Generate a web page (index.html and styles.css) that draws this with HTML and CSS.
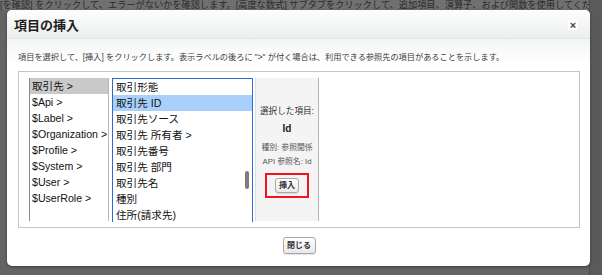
FILE: index.html
```html
<!DOCTYPE html>
<html lang="ja">
<head>
    <meta charset="UTF-8">
    <title>項目の挿入</title>
    <link rel="stylesheet" href="styles.css">
</head>
<body>
    <div class="page">
        <div class="page-text">[を確認] をクリックして、エラーがないかを確認します。[高度な数式] サブタブをクリックして、追加項目、演算子、および関数を使用してくだ</div>
        <div class="page-side"></div>
    </div>

    <div class="dialog">
        <div class="dialog-header">
            <h2>項目の挿入</h2>
            <span class="close">×</span>
        </div>
        <div class="dialog-body">
            <p class="hint">項目を選択して、[挿入] をクリックします。表示ラベルの後ろに "&gt;" が付く場合は、利用できる参照先の項目があることを示します。</p>
            <div class="picker">
                <ul class="list list-objects">
                    <li class="selected">取引先 &gt;</li>
                    <li>$Api &gt;</li>
                    <li>$Label &gt;</li>
                    <li>$Organization &gt;</li>
                    <li>$Profile &gt;</li>
                    <li>$System &gt;</li>
                    <li>$User &gt;</li>
                    <li>$UserRole &gt;</li>
                </ul>
                <div class="list list-fields">
                    <ul>
                        <li>取引形態</li>
                        <li class="selected">取引先 ID</li>
                        <li>取引先ソース</li>
                        <li>取引先 所有者 &gt;</li>
                        <li>取引先番号</li>
                        <li>取引先 部門</li>
                        <li>取引先名</li>
                        <li>種別</li>
                        <li>住所(請求先)</li>
                    </ul>
                    <span class="scroll-thumb"></span>
                </div>
                <div class="detail">
                    <div class="detail-label">選択した項目:</div>
                    <div class="detail-name">Id</div>
                    <div class="detail-meta">種別: 参照関係</div>
                    <div class="detail-meta">API 参照名: Id</div>
                    <div class="highlight-box">
                        <button class="btn">挿入</button>
                    </div>
                </div>
            </div>
            <div class="dialog-footer">
                <button class="btn">閉じる</button>
            </div>
        </div>
    </div>
</body>
</html>
```

FILE: styles.css
```css
body {
    margin: 0;
    font-family: "Liberation Sans", "Noto Sans CJK JP", sans-serif;
    background-color: #646464;
    overflow: hidden;
}
.page {
    width: 602px;
    height: 275px;
    position: relative;
}
.page-text {
    height: 10px;
    line-height: 10px;
    font-size: 9.2px;
    color: #2a2a2a;
    background: #707070;
    white-space: nowrap;
    overflow: hidden;
}
.page-side {
    position: absolute;
    top: 0;
    right: 0;
    width: 12px;
    height: 275px;
    background: #5a5a5a;
    border-left: 1px solid #4e4e4e;
}
.dialog {
    position: absolute;
    left: 7px;
    top: 10px;
    width: 583px;
    height: 256px;
    background: #fff;
    border-radius: 5px;
    box-shadow: 0 1px 3px rgba(0, 0, 0, 0.4);
    overflow: hidden;
}
.dialog-header {
    height: 27px;
    display: flex;
    align-items: center;
    justify-content: space-between;
    padding: 1px 12px 0 7px;
    background: linear-gradient(#fdfdfd, #eceeee);
    border-bottom: 1px solid #e2e4e4;
}
.dialog-header h2 {
    margin: 0;
    font-size: 13px;
    font-weight: bold;
    color: #1e1e1e;
}
.close {
    width: 10px;
    height: 10px;
    line-height: 10px;
    text-align: center;
    font-size: 11px;
    font-weight: bold;
    color: #444;
    background: #fff;
}
.dialog-body {
    padding: 0 10px 0 11px;
    background: linear-gradient(#f3f4f4, #fff 24px);
}
.hint {
    margin: 0;
    padding-top: 13px;
    height: 12px;
    line-height: 12px;
    font-size: 8.2px;
    color: #3c3c3c;
    white-space: nowrap;
}
.picker {
    margin-top: 7px;
    height: 157px;
    box-sizing: border-box;
    border: 1px solid #c4c4c4;
    padding: 6px 0 0 10px;
    display: flex;
    align-items: flex-start;
    overflow: hidden;
    background: #fff;
}
.list {
    margin: 0;
    padding: 0;
    list-style: none;
    height: 143px;
    font-size: 10.6px;
    color: #111;
}
.list li {
    height: 16px;
    line-height: 16px;
    padding-left: 2px;
    white-space: nowrap;
}
.list-objects {
    width: 78px;
    border-left: 1px solid #8a8a8a;
    border-right: 1px solid #b8b8b8;
}
.list-objects li.selected {
    background: #c9c9c9;
}
.list-fields {
    position: relative;
    margin-left: 3px;
    width: 139px;
    border: 1px solid #2c6bd6;
    border-bottom: none;
}
.list-fields ul {
    margin: 0;
    padding: 0;
    list-style: none;
}
.list-fields li {
    padding-left: 3px;
}
.list-fields li.selected {
    background: #a9d0fa;
}
.scroll-thumb {
    position: absolute;
    right: 3px;
    top: 92px;
    width: 4px;
    height: 18px;
    border-radius: 2px;
    background: #7d7d7d;
}
.detail {
    margin-left: 2px;
    width: 64px;
    height: 143px;
    background: #f4f4f4;
    border-left: 1px solid #dedede;
    border-right: 1px solid #b5b5b5;
    display: flex;
    flex-direction: column;
    align-items: center;
    padding-top: 27px;
    box-sizing: border-box;
    color: #333;
}
.detail-label {
    font-size: 8.6px;
    line-height: 12px;
}
.detail-name {
    margin-top: 5px;
    font-size: 10px;
    font-weight: bold;
    line-height: 14px;
    color: #222;
}
.detail-meta {
    font-size: 7.8px;
    line-height: 14px;
    color: #555;
}
.detail-name + .detail-meta {
    margin-top: 5px;
}
.highlight-box {
    margin-top: 4px;
    width: 44px;
    height: 25px;
    box-sizing: border-box;
    border: 2.5px solid #f0141c;
    display: flex;
    align-items: center;
    justify-content: center;
}
.btn {
    font-family: inherit;
    font-size: 8px;
    font-weight: bold;
    color: #333;
    padding: 0 3px;
    height: 15px;
    line-height: 13px;
    border: 1px solid #a8a8a8;
    border-radius: 3px;
    background: linear-gradient(#ffffff, #e9e9e9);
    box-shadow: 0 1px 0 rgba(0, 0, 0, 0.1);
}
.dialog-footer {
    padding-top: 9px;
    display: flex;
    justify-content: center;
}
.dialog-footer .btn {
    height: 17px;
    width: 33px;
    padding: 0;
}
```
